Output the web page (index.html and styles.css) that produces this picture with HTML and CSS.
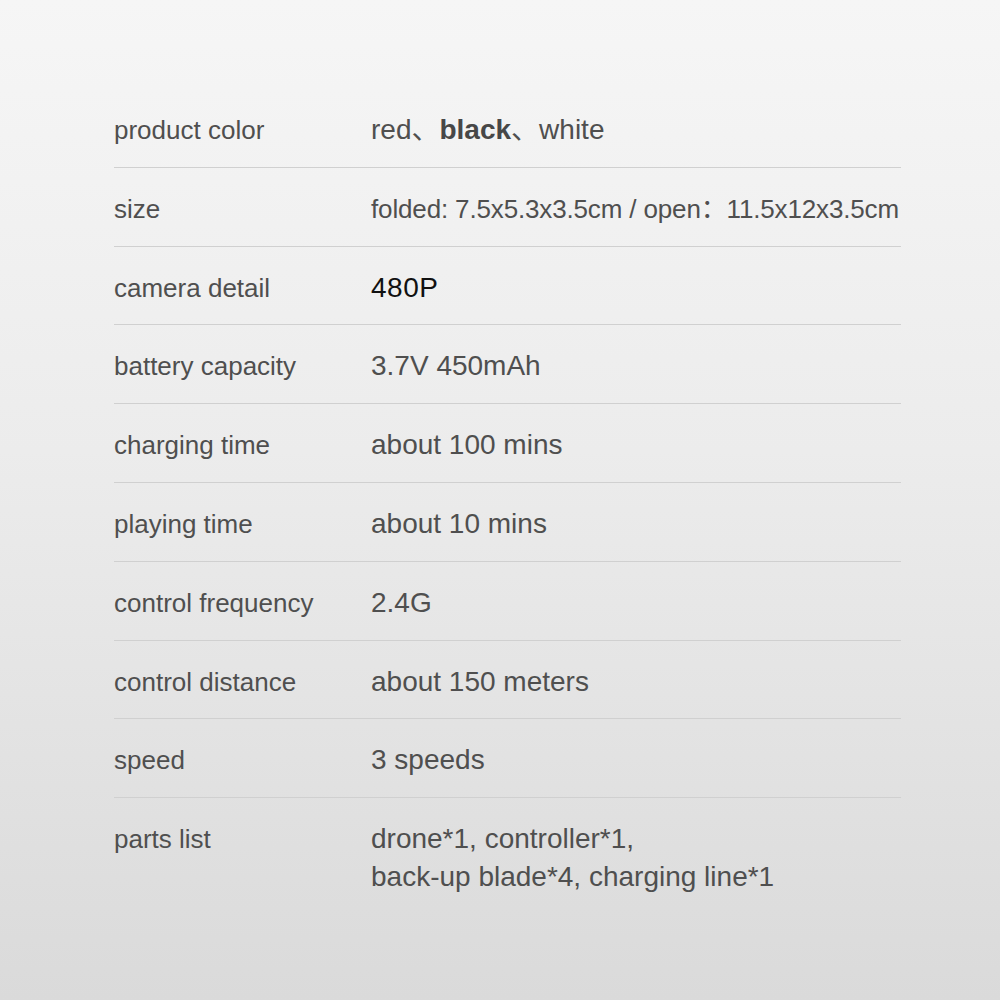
FILE: index.html
```html
<!DOCTYPE html>
<html>
<head>
<meta charset="utf-8">
<link rel="stylesheet" href="styles.css">
</head>
<body>
<div class="page">
  <div class="specs">
    <div class="row"><div class="label">product color</div><div class="value">red、<b class="strong">black</b>、white</div></div>
    <div class="row"><div class="label">size</div><div class="value compact">folded: 7.5x5.3x3.5cm / open：11.5x12x3.5cm</div></div>
    <div class="row"><div class="label">camera detail</div><div class="value dark">480P</div></div>
    <div class="row"><div class="label">battery capacity</div><div class="value">3.7V 450mAh</div></div>
    <div class="row"><div class="label">charging time</div><div class="value">about 100 mins</div></div>
    <div class="row"><div class="label">playing time</div><div class="value">about 10 mins</div></div>
    <div class="row"><div class="label">control frequency</div><div class="value">2.4G</div></div>
    <div class="row"><div class="label">control distance</div><div class="value">about 150 meters</div></div>
    <div class="row"><div class="label">speed</div><div class="value">3 speeds</div></div>
    <div class="row last"><div class="label">parts list</div><div class="value">drone*1, controller*1,<br>back-up blade*4, charging line*1</div></div>
  </div>
</div>
</body>
</html>
```
FILE: styles.css
```css
html, body {
  margin: 0;
  padding: 0;
}
body {
  width: 1000px;
  height: 1000px;
  background: linear-gradient(180deg, #f6f6f6 0%, #ececec 45%, #dadada 100%);
  font-family: "Liberation Sans", Arial, "Noto Sans CJK SC", sans-serif;
  color: #4f4f4f;
}
.page {
  padding: 89px 99px 0 114px;
}
.specs {
  display: flex;
  flex-direction: column;
}
.row {
  display: grid;
  grid-template-columns: 257px 1fr;
  height: 77.8px;
  border-bottom: 1px solid #d0d0d0;
  box-sizing: content-box;
}
.row.last {
  border-bottom: none;
}
.label, .value {
  line-height: 38px;
  padding-top: 22px;
  white-space: nowrap;
}
.label {
  font-size: 26px;
}
.value {
  font-size: 28px;
}
.value.compact {
  font-size: 26px;
  letter-spacing: -0.15px;
}
.strong {
  font-weight: bold;
  color: #474747;
}
.dark {
  color: #111;
  letter-spacing: 0.5px;
}
```
